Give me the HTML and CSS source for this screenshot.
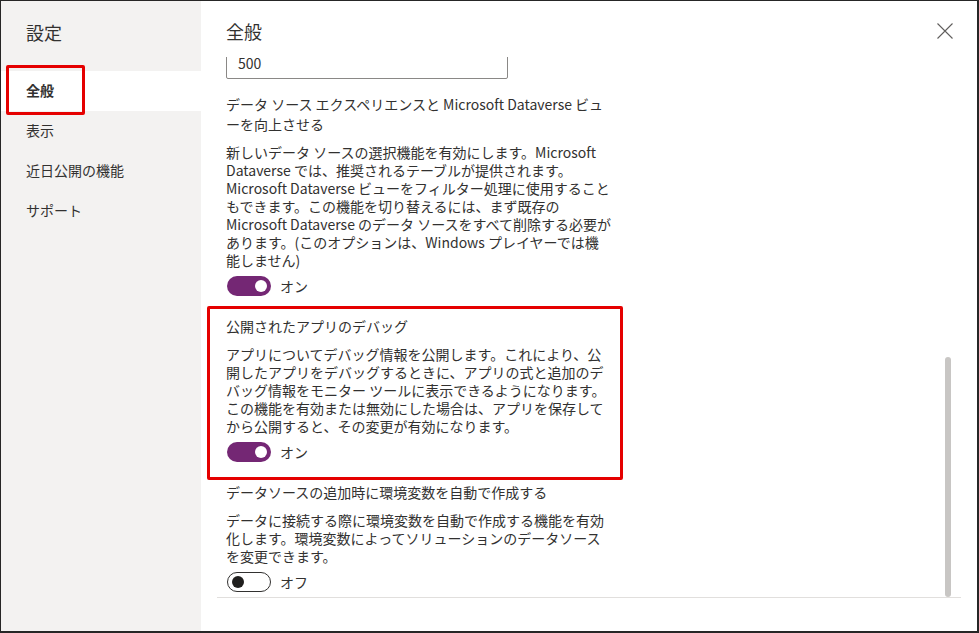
FILE: index.html
```html
<!DOCTYPE html>
<html lang="ja">
<head>
<meta charset="utf-8">
<title>設定</title>
<link rel="stylesheet" href="styles.css">
</head>
<body>
<div class="frame">
  <aside class="sidebar">
    <h1 class="side-title">設定</h1>
    <nav class="nav">
      <div class="nav-item active">全般</div>
      <div class="nav-item">表示</div>
      <div class="nav-item">近日公開の機能</div>
      <div class="nav-item">サポート</div>
    </nav>
  </aside>
  <main class="main">
    <header class="main-header">
      <h2 class="main-title">全般</h2>
      <button class="close" aria-label="閉じる">
        <svg width="16" height="16" viewBox="0 0 16 16"><path d="M0.5 0.5 L15.5 15.5 M15.5 0.5 L0.5 15.5" stroke="#605e5c" stroke-width="1.1" fill="none"/></svg>
      </button>
    </header>
    <div class="scroll">
      <div class="content">
        <div class="input">500</div>
        <section class="setting">
          <div class="setting-title">データ ソース エクスペリエンスと Microsoft Dataverse ビュ<br>ーを向上させる</div>
          <div class="setting-desc">新しいデータ ソースの選択機能を有効にします。Microsoft<br>Dataverse では、推奨されるテーブルが提供されます。<br>Microsoft Dataverse ビューをフィルター処理に使用すること<br>もできます。この機能を切り替えるには、まず既存の<br>Microsoft Dataverse のデータ ソースをすべて削除する必要が<br>あります。(このオプションは、Windows プレイヤーでは機<br>能しません)</div>
          <div class="toggle-row">
            <span class="toggle on"><span class="knob"></span></span>
            <span class="toggle-label">オン</span>
          </div>
        </section>
        <section class="setting">
          <div class="setting-title">公開されたアプリのデバッグ</div>
          <div class="setting-desc">アプリについてデバッグ情報を公開します。これにより、公<br>開したアプリをデバッグするときに、アプリの式と追加のデ<br>バッグ情報をモニター ツールに表示できるようになります。<br>この機能を有効または無効にした場合は、アプリを保存して<br>から公開すると、その変更が有効になります。</div>
          <div class="toggle-row">
            <span class="toggle on"><span class="knob"></span></span>
            <span class="toggle-label">オン</span>
          </div>
        </section>
        <section class="setting">
          <div class="setting-title">データソースの追加時に環境変数を自動で作成する</div>
          <div class="setting-desc">データに接続する際に環境変数を自動で作成する機能を有効<br>化します。環境変数によってソリューションのデータソース<br>を変更できます。</div>
          <div class="toggle-row">
            <span class="toggle off"><span class="knob"></span></span>
            <span class="toggle-label">オフ</span>
          </div>
        </section>
      </div>
      <div class="thumb"></div>
    </div>
  </main>
  <div class="highlight hl-nav"></div>
  <div class="highlight hl-debug"></div>
</div>
</body>
</html>
```
FILE: styles.css
```css
* { box-sizing: border-box; }
html, body { margin: 0; padding: 0; }
body {
  width: 979px;
  height: 633px;
  overflow: hidden;
  font-family: "Noto Sans CJK JP", sans-serif;
  color: #323130;
  background: #fff;
}
.frame {
  position: relative;
  display: flex;
  width: 979px;
  height: 633px;
  border: 1px solid #262626;
  border-right-width: 2px;
  border-bottom-width: 2px;
  background: #fff;
}
.sidebar {
  width: 200px;
  flex: none;
  background: #f3f2f1;
  padding-top: 17px;
}
.side-title {
  margin: 0 0 25px 0;
  padding-left: 25px;
  font-size: 18px;
  line-height: 28px;
  font-weight: 400;
}
.nav-item {
  height: 40px;
  line-height: 38px;
  padding-left: 25px;
  font-size: 14px;
}
.nav-item.active {
  background: #fff;
  font-weight: 700;
}
.main {
  flex: 1;
  display: flex;
  flex-direction: column;
}
.main-header {
  height: 56px;
  display: flex;
  justify-content: space-between;
  align-items: flex-start;
  padding: 18px 24px 0 25px;
}
.main-title {
  margin: 0;
  font-size: 18px;
  line-height: 24px;
  font-weight: 400;
}
.close {
  width: 16px;
  height: 16px;
  margin-top: 4px;
  padding: 0;
  border: 0;
  background: none;
  display: flex;
}
.scroll {
  position: relative;
  height: 541px;
  margin: 0 16px;
  border-bottom: 1px solid #e1dfdd;
  overflow: hidden;
}
.content {
  margin-top: -10px;
  padding-left: 9px;
}
.input {
  width: 282px;
  height: 32px;
  border: 1px solid #8a8886;
  border-radius: 2px;
  padding: 0 11px;
  font-size: 14px;
  line-height: 30px;
}
.setting { margin-top: 20px; }
.input + .setting { margin-top: 15px; }
.setting-title {
  font-size: 14px;
  line-height: 20px;
  margin-bottom: 9px;
  white-space: nowrap;
}
.setting-desc {
  font-size: 14px;
  line-height: 18px;
  margin-bottom: 7px;
  white-space: nowrap;
}
.toggle-row {
  display: flex;
  align-items: center;
  gap: 9px;
  height: 20px;
  padding-left: 1px;
}
.toggle {
  position: relative;
  width: 44px;
  height: 20px;
  border-radius: 10px;
  display: flex;
  align-items: center;
  padding: 0 4px;
}
.toggle.on {
  background: #742774;
  justify-content: flex-end;
}
.toggle.off {
  border: 1px solid #323130;
  background: #fff;
  justify-content: flex-start;
}
.knob {
  width: 12px;
  height: 12px;
  border-radius: 50%;
}
.toggle.on .knob { background: #fff; }
.toggle.off .knob { background: #201f1e; }
.toggle-label {
  font-size: 14px;
  line-height: 20px;
}
.thumb {
  position: absolute;
  right: 10px;
  bottom: 0;
  width: 6px;
  height: 240px;
  border-radius: 3px;
  background: #c8c6c4;
}
.highlight {
  position: absolute;
  border: 3px solid #e50000;
  border-radius: 2px;
}
.hl-nav { left: 5px; top: 64px; width: 79px; height: 50px; }
.hl-debug { left: 206px; top: 305px; width: 416px; height: 174px; }
```
